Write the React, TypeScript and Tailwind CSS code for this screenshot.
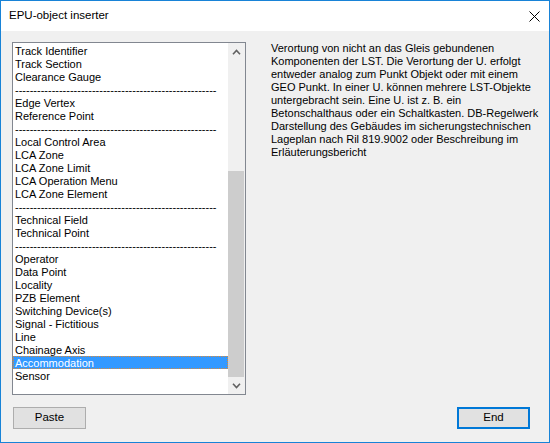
const DASHES = '-'.repeat(55)

const ITEMS = [
  'Track Identifier',
  'Track Section',
  'Clearance Gauge',
  DASHES,
  'Edge Vertex',
  'Reference Point',
  DASHES,
  'Local Control Area',
  'LCA Zone',
  'LCA Zone Limit',
  'LCA Operation Menu',
  'LCA Zone Element',
  DASHES,
  'Technical Field',
  'Technical Point',
  DASHES,
  'Operator',
  'Data Point',
  'Locality',
  'PZB Element',
  'Switching Device(s)',
  'Signal - Fictitious',
  'Line',
  'Chainage Axis',
  'Accommodation',
  'Sensor',
]

const SELECTED = 'Accommodation'

const DESCRIPTION = [
  'Verortung von nicht an das Gleis gebundenen',
  'Komponenten der LST. Die Verortung der U. erfolgt',
  'entweder analog zum Punkt Objekt oder mit einem',
  'GEO Punkt. In einer U. können mehrere LST-Objekte',
  'untergebracht sein. Eine U. ist z. B. ein',
  'Betonschalthaus oder ein Schaltkasten. DB-Regelwerk',
  'Darstellung des Gebäudes im sicherungstechnischen',
  'Lageplan nach Ril 819.9002 oder Beschreibung im',
  'Erläuterungsbericht',
]

function Chevron({ down = false }: { down?: boolean }) {
  return (
    <svg width="9" height="6" viewBox="0 0 9 6" className={down ? 'rotate-180' : ''}>
      <path d="M1 5.2 L4.5 1.5 L8 5.2" fill="none" stroke="#606060" strokeWidth="1.6" />
    </svg>
  )
}

function ListBox() {
  return (
    <div className="flex h-[353px] w-[234px] shrink-0 border border-[#828790] bg-white">
      <ul className="flex-1 overflow-hidden pt-px">
        {ITEMS.map((item, i) => {
          const selected = item === SELECTED
          return (
            <li
              key={i}
              className={
                selected
                  ? 'h-[13px] whitespace-nowrap border border-dotted border-[#d98a3a] bg-[#3399ff] pl-px text-[11px] leading-[12px] text-white'
                  : 'h-[13px] whitespace-nowrap pl-[2px] text-[11px] leading-[14px] text-black'
              }
            >
              {item}
            </li>
          )
        })}
      </ul>
      <div className="flex w-[17px] flex-col bg-[#f0f0f0]">
        <div className="flex h-[17px] items-center justify-center">
          <Chevron />
        </div>
        <div className="flex-1 pt-[111px] pr-px">
          <div className="h-[206px] bg-[#cdcdcd]" />
        </div>
        <div className="flex h-[17px] items-center justify-center">
          <Chevron down />
        </div>
      </div>
    </div>
  )
}

export default function App() {
  return (
    <div
      className="flex h-[443px] w-[550px] flex-col border border-[#1883d7] bg-[#f0f0f0] text-black"
      style={{ fontFamily: '"Liberation Sans", Arial, sans-serif' }}
    >
      <div className="flex h-[30px] shrink-0 items-center justify-between bg-white pl-2 pr-[9px]">
        <span className="text-[11.5px]">EPU-object inserter</span>
        <svg width="11" height="11" viewBox="0 0 11 11">
          <path d="M0.5 0.5 L10.5 10.5 M10.5 0.5 L0.5 10.5" stroke="#000" strokeWidth="1" />
        </svg>
      </div>

      <div className="flex flex-1 flex-col pl-[11px] pt-[11px] pr-[19px]">
        <div className="flex">
          <ListBox />
          <div className="ml-[25px] text-[11px] leading-[13px]">
            {DESCRIPTION.map((line) => (
              <div key={line} className="whitespace-nowrap">
                {line}
              </div>
            ))}
          </div>
        </div>

        <div className="mt-[12px] flex justify-between pl-px">
          <button className="h-[22px] w-[73px] border border-[#adadad] bg-[#e1e1e1] text-[11.5px]">
            Paste
          </button>
          <button className="h-[22px] w-[73px] border-2 border-[#0078d7] bg-[#e1e1e1] text-[11.5px]">
            End
          </button>
        </div>
      </div>
    </div>
  )
}
